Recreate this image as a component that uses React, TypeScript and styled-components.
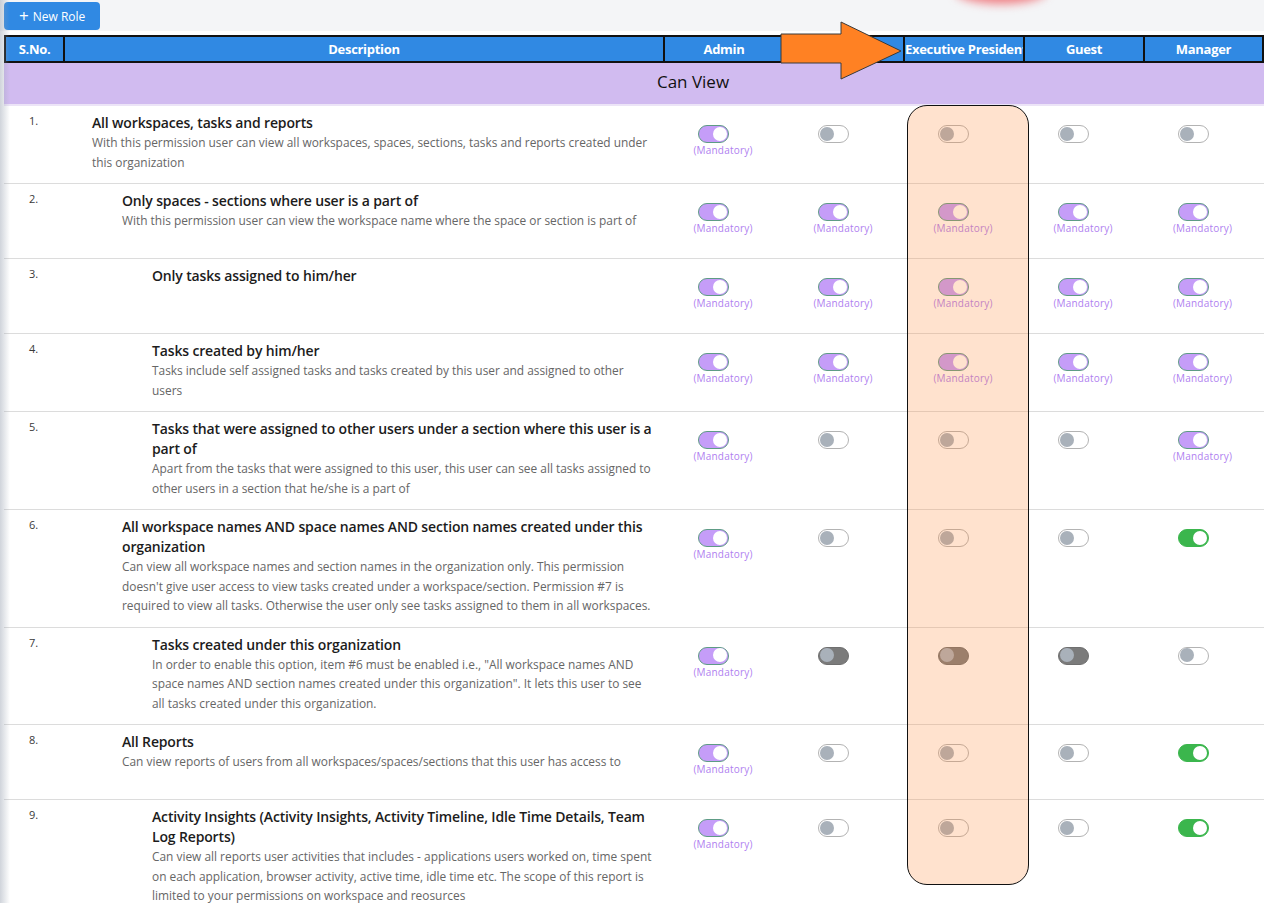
import React from 'react'
import styled, { createGlobalStyle } from 'styled-components'

type ToggleState = 'mandatory' | 'off' | 'dark' | 'on'

interface Permission {
    no: number
    level: number
    title: string
    desc?: string
    toggles: ToggleState[]
}

const M: ToggleState = 'mandatory'

const permissions: Permission[] = [
    {
        no: 1,
        level: 0,
        title: 'All workspaces, tasks and reports',
        desc: 'With this permission user can view all workspaces, spaces, sections, tasks and reports created under this organization',
        toggles: [M, 'off', 'off', 'off', 'off'],
    },
    {
        no: 2,
        level: 1,
        title: 'Only spaces - sections where user is a part of',
        desc: 'With this permission user can view the workspace name where the space or section is part of',
        toggles: [M, M, M, M, M],
    },
    {
        no: 3,
        level: 2,
        title: 'Only tasks assigned to him/her',
        toggles: [M, M, M, M, M],
    },
    {
        no: 4,
        level: 2,
        title: 'Tasks created by him/her',
        desc: 'Tasks include self assigned tasks and tasks created by this user and assigned to other users',
        toggles: [M, M, M, M, M],
    },
    {
        no: 5,
        level: 2,
        title: 'Tasks that were assigned to other users under a section where this user is a part of',
        desc: 'Apart from the tasks that were assigned to this user, this user can see all tasks assigned to other users in a section that he/she is a part of',
        toggles: [M, 'off', 'off', 'off', M],
    },
    {
        no: 6,
        level: 1,
        title: 'All workspace names AND space names AND section names created under this organization',
        desc: "Can view all workspace names and section names in the organization only. This permission doesn't give user access to view tasks created under a workspace/section. Permission #7 is required to view all tasks. Otherwise the user only see tasks assigned to them in all workspaces.",
        toggles: [M, 'off', 'off', 'off', 'on'],
    },
    {
        no: 7,
        level: 2,
        title: 'Tasks created under this organization',
        desc: 'In order to enable this option, item #6 must be enabled i.e., "All workspace names AND space names AND section names created under this organization". It lets this user to see all tasks created under this organization.',
        toggles: [M, 'dark', 'dark', 'dark', 'off'],
    },
    {
        no: 8,
        level: 1,
        title: 'All Reports',
        desc: 'Can view reports of users from all workspaces/spaces/sections that this user has access to',
        toggles: [M, 'off', 'off', 'off', 'on'],
    },
    {
        no: 9,
        level: 2,
        title: 'Activity Insights (Activity Insights, Activity Timeline, Idle Time Details, Team Log Reports)',
        desc: 'Can view all reports user activities that includes - applications users worked on, time spent on each application, browser activity, active time, idle time etc. The scope of this report is limited to your permissions on workspace and reosurces',
        toggles: [M, 'off', 'off', 'off', 'on'],
    },
]

const roles = ['Admin', '', 'Executive President', 'Guest', 'Manager']

const COLUMNS = '59px 600px 120px 120px 120px 120px 119px'

export default function App() {
    return (
        <Page>
            <GlobalStyle />
            <Toolbar>
                <NewRoleButton>
                    <span>+</span> New Role
                </NewRoleButton>
            </Toolbar>
            <Table>
                <HeaderRow>
                    <HeaderCell>S.No.</HeaderCell>
                    <HeaderCell>Description</HeaderCell>
                    {roles.map((r, i) => (
                        <HeaderCell key={i}>{r}</HeaderCell>
                    ))}
                </HeaderRow>
                <SectionRow>Can View</SectionRow>
                {permissions.map(p => (
                    <Row key={p.no}>
                        <NumberCell>{p.no}.</NumberCell>
                        <DescCell $level={p.level}>
                            <Title>{p.title}</Title>
                            {p.desc && <Desc>{p.desc}</Desc>}
                        </DescCell>
                        {p.toggles.map((t, i) => (
                            <ToggleCell key={i}>
                                <Toggle $state={t} />
                                {t === 'mandatory' && <Mandatory>(Mandatory)</Mandatory>}
                            </ToggleCell>
                        ))}
                    </Row>
                ))}
            </Table>

            <Glow />
            <Arrow width="126" height="60" viewBox="0 0 126 60">
                <polygon
                    points="1,13 61,13 61,1 121,30 61,58 61,42 1,42"
                    fill="#ff8123"
                    stroke="#3a3a3a"
                    strokeWidth="1"
                />
            </Arrow>
            <Highlight />
        </Page>
    )
}

const GlobalStyle = createGlobalStyle`
    body {
        margin: 0;
        background: #fff;
        font-family: "Open Sans", "Liberation Sans", sans-serif;
    }
`

const Page = styled.div`
    position: relative;
    min-height: 903px;
    overflow: hidden;

    &::before {
        content: '';
        position: absolute;
        left: 0;
        top: 0;
        bottom: 0;
        width: 10px;
        background: linear-gradient(to right, rgba(150, 160, 175, 0.45), rgba(150, 160, 175, 0));
        pointer-events: none;
        z-index: 5;
    }
`

const Toolbar = styled.div`
    height: 31px;
    margin-bottom: 4px;
    background: #f4f5f7;
    padding: 2px 0 0 4px;
    box-sizing: border-box;
`

const NewRoleButton = styled.button`
    display: flex;
    align-items: center;
    gap: 4px;
    height: 28px;
    padding: 0 15px;
    border: none;
    border-radius: 4px;
    background: #3089e3;
    color: #fff;
    font-family: inherit;
    font-size: 12px;
    font-weight: 500;

    span {
        font-size: 17px;
        font-weight: 400;
        line-height: 1;
        margin-top: -2px;
    }
`

const Table = styled.div`
    margin-left: 4px;
`

const HeaderRow = styled.div`
    display: grid;
    grid-template-columns: ${COLUMNS};
    background: #3089e3;
    border-top: 2px solid #111;
    border-bottom: 2px solid #111;
    border-left: 2px solid #111;
`

const HeaderCell = styled.div`
    height: 24px;
    border-right: 2px solid #111;
    color: #fff;
    font-size: 13px;
    font-weight: 700;
    letter-spacing: -0.3px;
    text-align: center;
    line-height: 24px;
    white-space: nowrap;
    overflow: hidden;
`

const SectionRow = styled.div`
    height: 43px;
    background: #d1bbf0;
    color: #111;
    font-size: 17px;
    font-weight: 500;
    line-height: 38px;
    text-align: center;
    padding-left: 118px;
    border-bottom: 2px solid #ece4f7;
    box-sizing: border-box;
`

const Row = styled.div`
    display: grid;
    grid-template-columns: ${COLUMNS};
    min-height: 74px;
    border-bottom: 1px solid #dcdcdc;
    background: #fff;
`

const NumberCell = styled.div`
    padding: 7px 0 0 25px;
    font-size: 11px;
    color: #3a3a3a;
`

const DescCell = styled.div<{ $level: number }>`
    padding: 7px 10px 11px ${p => 29 + p.$level * 30}px;
`

const Title = styled.div`
    font-size: 14px;
    font-weight: 600;
    letter-spacing: -0.15px;
    color: #1c1c1c;
    line-height: 20px;
`

const Desc = styled.div`
    font-size: 11.9px;
    color: #666;
    line-height: 19.5px;
`

const ToggleCell = styled.div`
    display: flex;
    flex-direction: column;
    align-items: center;
    padding-top: 19px;
`

const trackColors: Record<ToggleState, string> = {
    mandatory: '#c59df8',
    off: '#ffffff',
    dark: '#7b7b7b',
    on: '#3bb64d',
}

const borderColors: Record<ToggleState, string> = {
    mandatory: '#5e9c85',
    off: '#b3b3b3',
    dark: '#6f6f6f',
    on: '#3bb64d',
}

const Toggle = styled.span<{ $state: ToggleState }>`
    position: relative;
    display: block;
    width: 31px;
    height: 18px;
    margin-right: 19px;
    box-sizing: border-box;
    border-radius: 10px;
    border: 1.5px solid ${p => borderColors[p.$state]};
    background: ${p => trackColors[p.$state]};

    &::after {
        content: '';
        position: absolute;
        top: 0.5px;
        ${p => (p.$state === 'mandatory' || p.$state === 'on' ? 'right: 1px;' : 'left: 1px;')}
        width: 14px;
        height: 14px;
        border-radius: 50%;
        background: ${p => (p.$state === 'mandatory' || p.$state === 'on' ? '#fff' : '#a9b1ba')};
    }
`

const Mandatory = styled.div`
    margin-top: 1px;
    font-size: 10px;
    line-height: 12px;
    color: #b07ff0;
    letter-spacing: 0.2px;
`

const Glow = styled.div`
    position: absolute;
    left: 955px;
    top: -22px;
    width: 92px;
    height: 26px;
    border-radius: 50%;
    background: rgba(238, 90, 95, 0.75);
    filter: blur(5px);
`

const Arrow = styled.svg`
    position: absolute;
    left: 780px;
    top: 21px;
    overflow: visible;
    z-index: 3;
`

const Highlight = styled.div`
    position: absolute;
    left: 907px;
    top: 105px;
    width: 122px;
    height: 780px;
    box-sizing: border-box;
    border: 1px solid #111;
    border-radius: 20px;
    background: rgba(255, 140, 60, 0.25);
    pointer-events: none;
    z-index: 2;
`
